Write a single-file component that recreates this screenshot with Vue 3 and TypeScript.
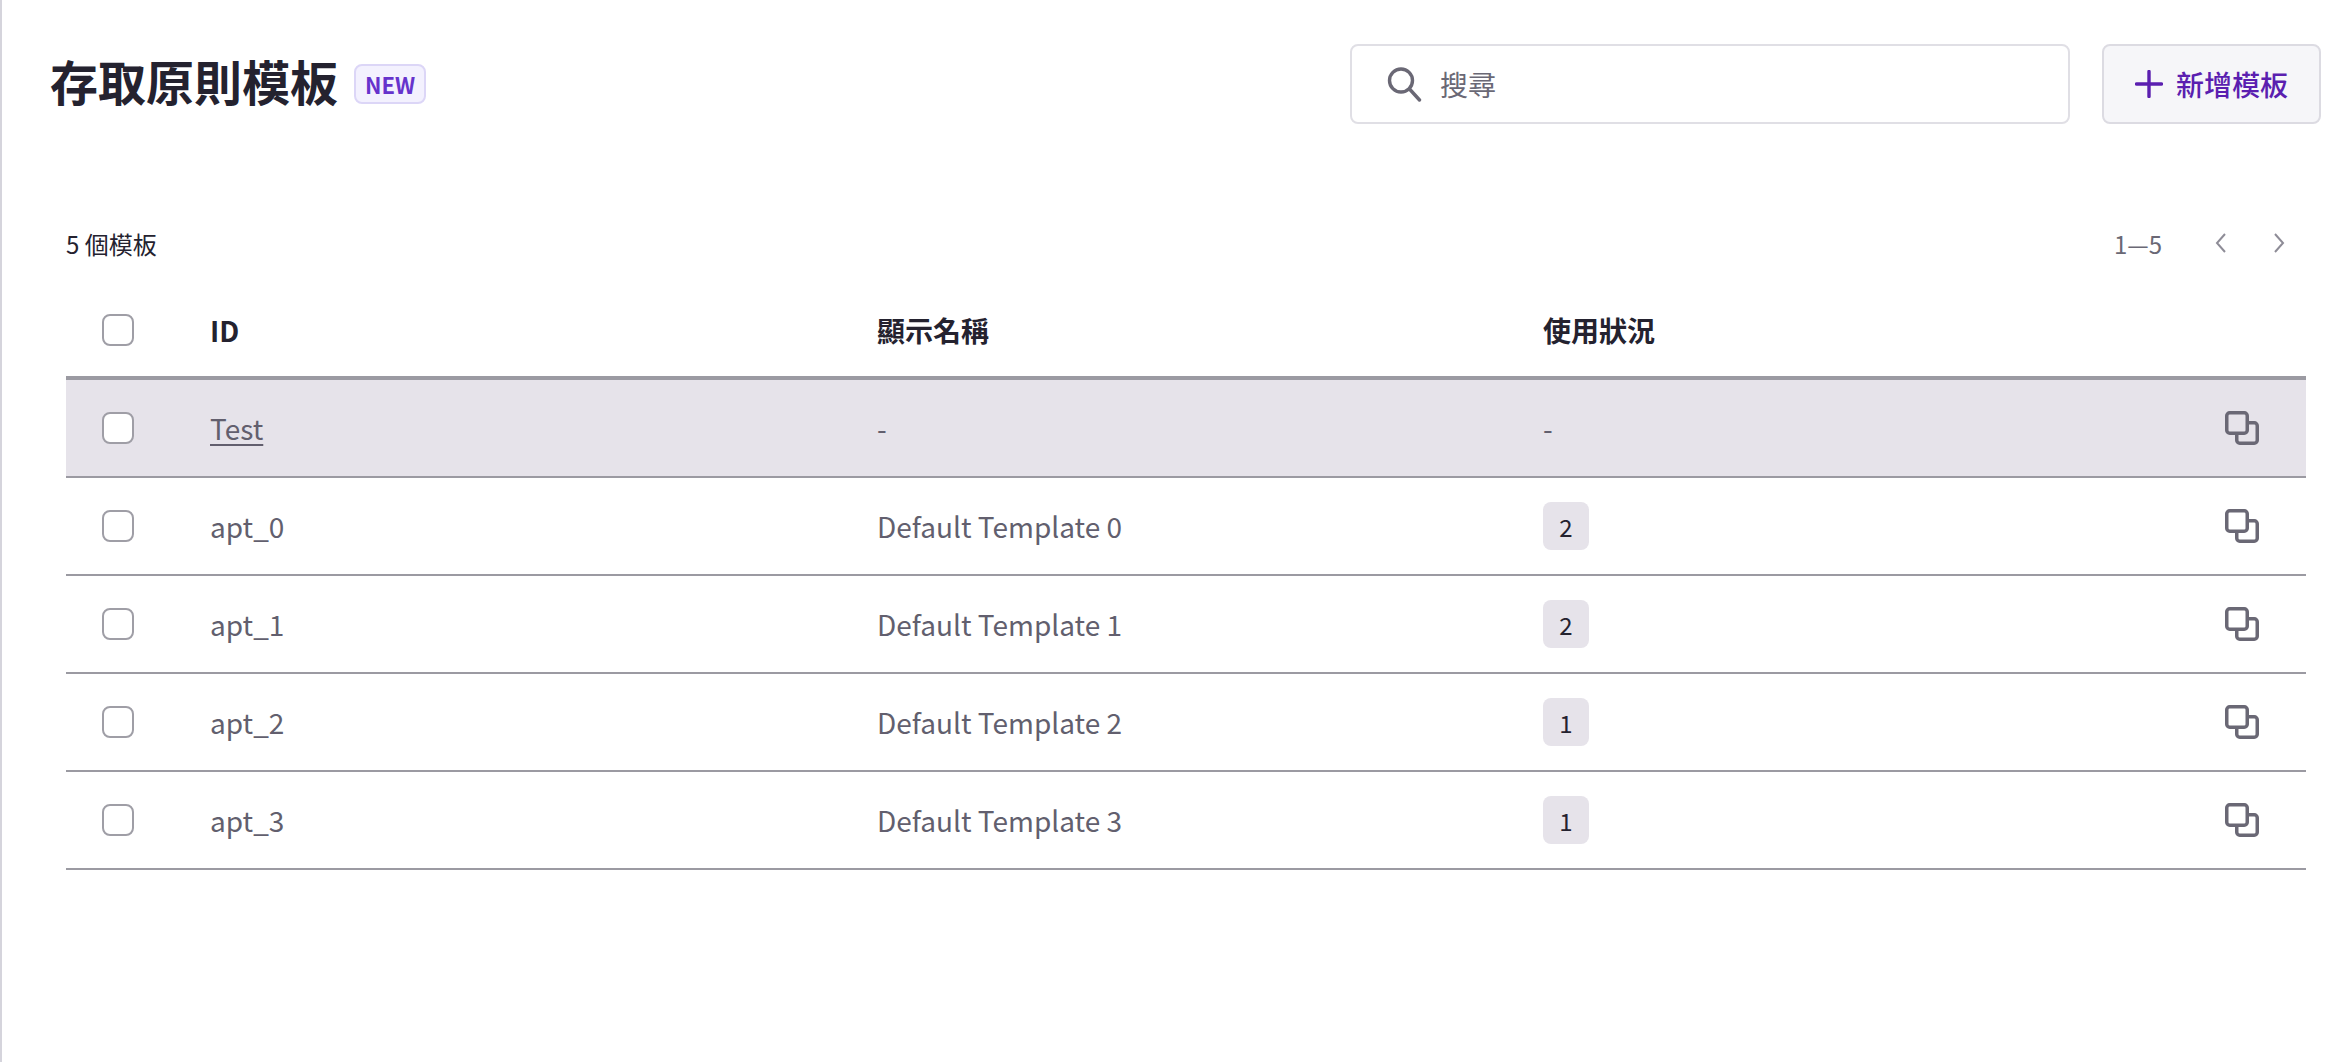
<script setup lang="ts">
interface Row {
  id: string
  name: string
  usage: number | null
}

const rows: Row[] = [
  { id: 'Test', name: '-', usage: null },
  { id: 'apt_0', name: 'Default Template 0', usage: 2 },
  { id: 'apt_1', name: 'Default Template 1', usage: 2 },
  { id: 'apt_2', name: 'Default Template 2', usage: 1 },
  { id: 'apt_3', name: 'Default Template 3', usage: 1 },
]
</script>

<template>
  <div class="page">
    <header class="top">
      <div class="heading">
        <h1 class="title">存取原則模板</h1>
        <span class="new">NEW</span>
      </div>
      <div class="actions">
        <label class="search">
          <svg class="search-icon" width="36" height="36" viewBox="0 0 36 36" fill="none">
            <circle cx="15" cy="14.5" r="11.5" stroke="#6a6875" stroke-width="3.4" />
            <path d="M23.5 23l10 11" stroke="#6a6875" stroke-width="3.4" stroke-linecap="round" />
          </svg>
          <input class="search-input" type="text" placeholder="搜尋" />
        </label>
        <button class="add" type="button">
          <svg width="28" height="28" viewBox="0 0 28 28" fill="none">
            <path d="M14 1.500v25M1.500 14h25" stroke="#5b1fb0" stroke-width="3.400" stroke-linecap="round" />
          </svg>
          <span>新增模板</span>
        </button>
      </div>
    </header>

    <section class="list">
      <div class="toolbar">
        <span class="count">5 個模板</span>
        <div class="pager">
          <span class="range">1—5</span>
          <svg class="chev" width="14" height="22" viewBox="0 0 14 22" fill="none">
            <path d="M11 2L3 11l8 9" stroke="#8e8c97" stroke-width="2" />
          </svg>
          <svg class="chev next" width="14" height="22" viewBox="0 0 14 22" fill="none">
            <path d="M3 2l8 9-8 9" stroke="#8e8c97" stroke-width="2" />
          </svg>
        </div>
      </div>

      <div class="row head">
        <div class="check-cell"><span class="check"></span></div>
        <div>ID</div>
        <div>顯示名稱</div>
        <div>使用狀況</div>
        <div></div>
      </div>

      <div v-for="(row, i) in rows" :key="row.id" class="row body" :class="{ active: i === 0 }">
        <div class="check-cell"><span class="check"></span></div>
        <div><span :class="{ link: i === 0 }">{{ row.id }}</span></div>
        <div>{{ row.name }}</div>
        <div>
          <span v-if="row.usage !== null" class="badge">{{ row.usage }}</span>
          <span v-else>-</span>
        </div>
        <div class="copy-cell">
          <svg width="34" height="34" viewBox="0 0 34 34" fill="none">
            <path d="M24 11.750h5.250a3 3 0 0 1 3 3v14.500a3 3 0 0 1-3 3h-14.500a3 3 0 0 1-3-3V24" stroke="#6a6875" stroke-width="3.500" />
            <rect x="1.750" y="1.750" width="20.500" height="20.500" rx="3" stroke="#6a6875" stroke-width="3.500" />
          </svg>
        </div>
      </div>
    </section>
  </div>
</template>

<style>
html,
body {
  margin: 0;
  background: #fff;
}
</style>

<style scoped>
.page {
  box-sizing: border-box;
  min-height: 1062px;
  border-left: 2px solid #d5d4dc;
  padding: 44px 31px 0 48px;
  background: #fff;
  font-family: "Noto Sans CJK TC", "Noto Sans", sans-serif;
  color: #24222f;
}

.top {
  display: flex;
  align-items: center;
  justify-content: space-between;
}

.heading {
  display: flex;
  align-items: center;
  gap: 16px;
}

.title {
  margin: 0;
  padding-bottom: 8px;
  font-size: 48px;
  line-height: 72px;
  font-weight: 700;
  color: #24222f;
}

.new {
  box-sizing: border-box;
  height: 40px;
  width: 72px;
  display: flex;
  align-items: center;
  justify-content: center;
  border: 2px solid #dcd6f7;
  border-radius: 8px;
  background: #f3f1fe;
  color: #6633cc;
  font-size: 22px;
  font-weight: 700;
}

.actions {
  display: flex;
  gap: 32px;
}

.search {
  box-sizing: border-box;
  width: 720px;
  height: 80px;
  display: flex;
  align-items: center;
  gap: 18px;
  padding-left: 34px;
  border: 2px solid #e0dfe5;
  border-radius: 8px;
  background: #fff;
}

.search-input {
  flex: 1;
  min-width: 0;
  border: 0;
  outline: 0;
  padding: 0;
  background: transparent;
  font: inherit;
  font-size: 28px;
  color: #24222f;
}

.search-input::placeholder {
  color: #6a6875;
  opacity: 1;
}

.add {
  box-sizing: border-box;
  width: 219px;
  height: 80px;
  display: flex;
  align-items: center;
  justify-content: center;
  gap: 13px;
  border: 2px solid #dcdbe2;
  border-radius: 8px;
  background: #f6f6f9;
  color: #5b1fb0;
  font-family: inherit;
  font-size: 28px;
  font-weight: 500;
  padding: 0;
}

.list {
  margin: 0 15px 0 16px;
}

.toolbar {
  margin-top: 80px;
  margin-bottom: 2px;
  height: 78px;
  display: flex;
  align-items: center;
  justify-content: space-between;
}

.count {
  font-size: 24px;
}

.pager {
  display: flex;
  align-items: center;
  color: #6a6875;
  font-size: 24px;
}

.range {
  margin-right: 52px;
}

.chev.next {
  margin-left: 44px;
  margin-right: 20px;
}

.row {
  display: grid;
  grid-template-columns: 144px 667px 666px 1fr 81px;
  align-items: center;
  font-size: 28px;
}

.head {
  height: 96px;
  box-sizing: border-box;
  border-bottom: 4px solid #9b9aa2;
  font-weight: 700;
  color: #24222f;
}

.body {
  height: 98px;
  box-sizing: border-box;
  border-bottom: 2px solid #9b9aa2;
  color: #625f6e;
}

.active {
  background: #e6e3ea;
}

.check-cell {
  display: flex;
  padding-left: 36px;
}

.check {
  box-sizing: border-box;
  width: 32px;
  height: 32px;
  border: 2px solid #9f9ea6;
  border-radius: 8px;
  background: #fff;
}

.link {
  text-decoration: underline;
  text-underline-offset: 4px;
}

.badge {
  display: inline-flex;
  align-items: center;
  justify-content: center;
  width: 46px;
  height: 48px;
  border-radius: 8px;
  background: #e6e3ea;
  color: #24222f;
  font-size: 24px;
}

.copy-cell {
  display: flex;
  justify-content: flex-start;
}
</style>
